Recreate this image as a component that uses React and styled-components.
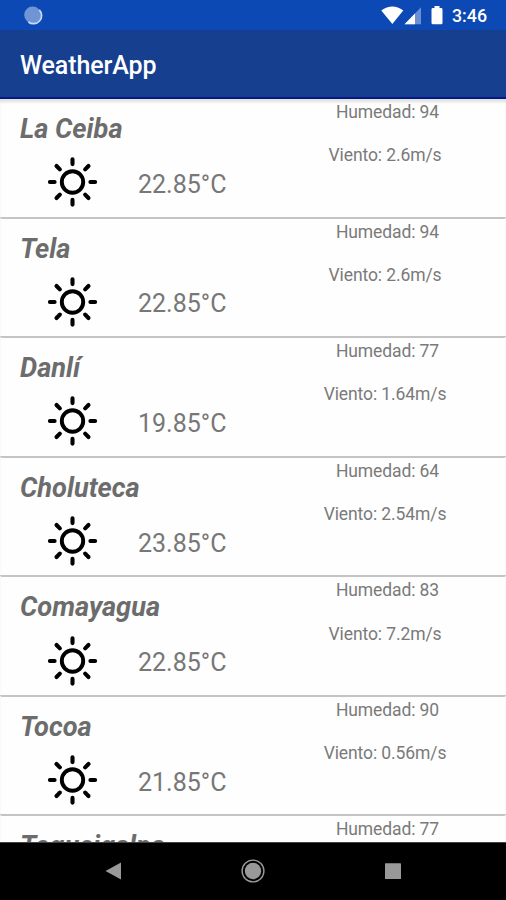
import styled, { createGlobalStyle } from "styled-components";

const GlobalStyle = createGlobalStyle`
  body {
    margin: 0;
    background: #fff;
    font-family: Roboto, sans-serif;
  }
`;

const Screen = styled.div`
  width: 506px;
  height: 900px;
  display: flex;
  flex-direction: column;
  overflow: hidden;
`;

const StatusBar = styled.div`
  flex: none;
  height: 30px;
  display: flex;
  align-items: center;
  padding: 0 19px 0 23px;
  box-sizing: border-box;
  background: #0c49b5;
  color: white;
`;

const StatusIcons = styled.div`
  display: flex;
  align-items: center;
  margin-left: auto;
`;

const Battery = styled.svg`
  margin-left: 9px;
`;

const Clock = styled.span`
  width: 35px;
  margin-left: 9px;
  font-size: 17.8px;
  font-weight: 500;
  line-height: 30px;
  padding-top: 2px;
  white-space: nowrap;
`;

const AppBar = styled.header`
  flex: none;
  height: 69px;
  box-sizing: border-box;
  padding: 4px 20px 0;
  display: flex;
  align-items: center;
  background: #163f90;
  border-bottom: 2px solid #04188a;
`;

const AppTitle = styled.h1`
  margin: 0;
  color: white;
  font-size: 25px;
  font-weight: 500;
  letter-spacing: -0.1px;
`;

const List = styled.main`
  flex: 1;
  min-height: 0;
  overflow: hidden;
  background: #fefefe;
  box-shadow: inset 0 4px 3px -1px #e0e0dc;
`;

const Row = styled.section`
  height: 119.55px;
  box-sizing: border-box;
  display: flex;
  justify-content: space-between;
  border-bottom: 2px solid #c4c4c4;
  border-radius: 2px;
`;

const Place = styled.div`
  padding: 14px 0 0 20px;
`;

const City = styled.h2`
  margin: 0;
  color: #6c6c6c;
  font-size: 27.2px;
  font-weight: 700;
  font-style: italic;
  line-height: 32px;
`;

const Weather = styled.div`
  display: flex;
  align-items: center;
  margin-top: 11.4px;
  padding-left: 27px;
`;

const Temperature = styled.span`
  margin: 6px 0 0 40px;
  color: #777;
  font-size: 25px;
  line-height: 30px;
`;

const Details = styled.div`
  width: 242px;
  padding-top: 3px;
  color: #7a7a7a;
  font-size: 17.5px;
  letter-spacing: -0.1px;
  line-height: 20px;
  text-align: center;
`;

const Humidity = styled.div`
  padding-left: 5px;
`;

const Wind = styled.div`
  margin-top: 23.4px;
`;

const NavBar = styled.nav`
  flex: none;
  height: 58px;
  box-sizing: border-box;
  display: flex;
  align-items: center;
  justify-content: space-between;
  padding: 0 104px 2px;
  background: #000;
  border-top: 1px solid #444;
`;

const cities = [
  { name: "La Ceiba", temp: "22.85", humidity: 94, wind: "2.6" },
  { name: "Tela", temp: "22.85", humidity: 94, wind: "2.6" },
  { name: "Danlí", temp: "19.85", humidity: 77, wind: "1.64" },
  { name: "Choluteca", temp: "23.85", humidity: 64, wind: "2.54" },
  { name: "Comayagua", temp: "22.85", humidity: 83, wind: "7.2" },
  { name: "Tocoa", temp: "21.85", humidity: 90, wind: "0.56" },
  { name: "Tegucigalpa", humidity: 77 },
];

const rays = [0, 45, 90, 135, 180, 225, 270, 315];

const SunIcon = () => (
  <svg width="51" height="51" viewBox="-25.5 -26 51 51">
    <g fill="none" stroke="#000" strokeLinecap="round">
      <circle r="10.7" strokeWidth="3.9" />
      {rays.map((angle) => (
        <path
          key={angle}
          d="M0 -17.9V-22.6"
          strokeWidth="4.1"
          transform={`rotate(${angle})`}
        />
      ))}
    </g>
  </svg>
);

const SyncIcon = () => (
  <svg width="20" height="30" viewBox="0 0 20 30">
    <circle cx="9.7" cy="15" r="8.5" fill="#7095d6" />
    <path
      d="M16.3 9.8A8.2 8.2 0 0 1 5.4 22"
      fill="none"
      stroke="#c7dcf6"
      strokeWidth="1.7"
    />
  </svg>
);

const WifiIcon = () => (
  <svg width="23" height="30" viewBox="0 0 23 30">
    <path d="M.3 10.6Q11.3 2.2 22.3 10.6L11.3 24Z" fill="#fff" />
  </svg>
);

const SignalIcon = () => (
  <svg width="18" height="30" viewBox="0 0 18 30">
    <path d="M.5 24.3L17 7.3V24.3Z" fill="#6990d3" />
    <path d="M.5 24.3L11 13.5V24.3Z" fill="#fff" />
  </svg>
);

const BatteryIcon = () => (
  <Battery width="12" height="30" viewBox="0 0 12 30">
    <path
      d="M3.5 6h5v2h1.6q1.4 0 1.4 1.4v13.4q0 1.5-1.4 1.5H1.9q-1.4 0-1.4-1.5V9.4Q.5 8 1.9 8h1.6Z"
      fill="#fff"
    />
  </Battery>
);

const BackIcon = () => (
  <svg width="18" height="18" viewBox="0 0 18 18">
    <path d="M1.5 9L17 .5V17.5Z" fill="#999" />
  </svg>
);

const HomeIcon = () => (
  <svg width="24" height="24" viewBox="0 0 24 24">
    <circle cx="12" cy="12" r="10.9" fill="none" stroke="#999" strokeWidth="1.4" />
    <circle cx="12" cy="12" r="8.2" fill="#999" />
  </svg>
);

const RecentsIcon = () => (
  <svg width="18" height="18" viewBox="0 0 18 18">
    <rect x="1" y="1.2" width="16" height="15.8" rx=".6" fill="#999" />
  </svg>
);

const CityRow = ({ city }) => (
  <Row>
    <Place>
      <City>{city.name}</City>
      {city.temp && (
        <Weather>
          <SunIcon />
          <Temperature>{city.temp}°C</Temperature>
        </Weather>
      )}
    </Place>
    <Details>
      <Humidity>Humedad: {city.humidity}</Humidity>
      {city.wind && <Wind>Viento: {city.wind}m/s</Wind>}
    </Details>
  </Row>
);

const App = () => {
  return (
    <>
      <GlobalStyle />
      <Screen>
        <StatusBar>
          <SyncIcon />
          <StatusIcons>
            <WifiIcon />
            <SignalIcon />
            <BatteryIcon />
            <Clock>3:46</Clock>
          </StatusIcons>
        </StatusBar>
        <AppBar>
          <AppTitle>WeatherApp</AppTitle>
        </AppBar>
        <List>
          {cities.map((city) => (
            <CityRow key={city.name} city={city} />
          ))}
        </List>
        <NavBar>
          <BackIcon />
          <HomeIcon />
          <RecentsIcon />
        </NavBar>
      </Screen>
    </>
  );
};

export default App;
